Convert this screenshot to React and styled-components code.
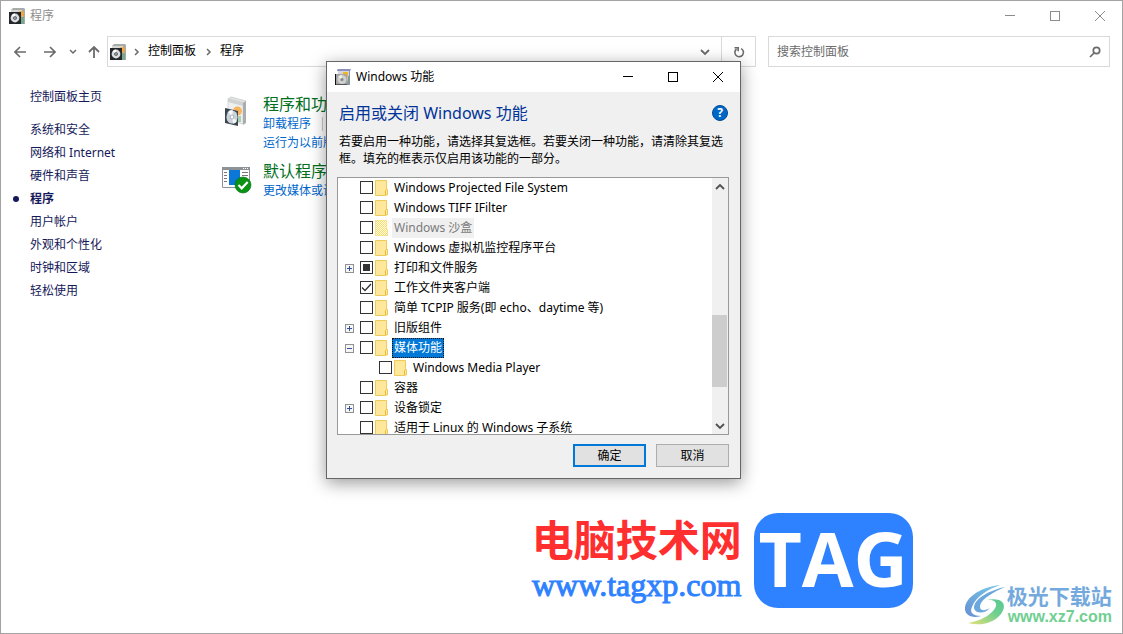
import React, { useState } from "react";
import styled, { createGlobalStyle, css } from "styled-components";

const Global = createGlobalStyle`
  * { box-sizing: border-box; }
  body {
    margin: 0;
    background: #fff;
    color: #000;
    font: 12px/16px "Noto Sans", "Noto Sans CJK SC", sans-serif;
  }
  button, input { font: inherit; color: inherit; }
  a { text-decoration: none; color: inherit; }
  ul { list-style: none; margin: 0; padding: 0; }
  svg { display: block; flex: none; }
`;

const Explorer = styled.div`
  position: relative;
  display: flex;
  flex-direction: column;
  min-height: 100vh;
  border: 1px solid #a3a3a3;
  background: #fff;
`;

const TitleBar = styled.header`
  display: flex;
  align-items: center;
  height: 29px;
  padding-left: 8px;
  color: ${(p) => (p.$active ? "#000" : "#8c8c8c")};
  background: #fff;
  ${(p) => p.$active && css`height: 30px;`}
`;

const Caption = styled.span`
  flex: 1;
  margin-left: 5px;
`;

const WindowButton = styled.button`
  display: flex;
  align-items: center;
  justify-content: center;
  width: 45px;
  height: 100%;
  padding: 0;
  border: 0;
  background: none;
`;

const Toolbar = styled.nav`
  display: flex;
  height: 31px;
  margin-top: 6px;
  padding: 0 12px 0 4px;
  color: #6b6b6b;
`;

const NavButton = styled.button`
  display: flex;
  align-items: center;
  justify-content: center;
  width: ${(p) => p.$width}px;
  padding: 0;
  border: 0;
  background: none;
`;

const AddressBar = styled.div`
  display: flex;
  align-items: center;
  flex: 645 1 0;
  margin-right: 12px;
  padding-left: 2px;
  border: 1px solid #d9d9d9;
  color: #6b6b6b;
`;

const Crumb = styled.a`
  color: #000;
  margin: 0 10px 0 8px;
  padding-bottom: 2px;
`;

const Crumbs = styled.div`
  display: flex;
  align-items: center;
  flex: 1;
  padding-left: 8px;
`;

const BarButton = styled.button`
  display: flex;
  align-items: center;
  justify-content: center;
  align-self: stretch;
  width: 34px;
  padding: 0;
  border: 0;
  border-left: 1px solid ${(p) => (p.$divided ? "#d9d9d9" : "transparent")};
  background: none;
`;

const SearchBox = styled.label`
  display: flex;
  align-items: center;
  flex: 324 1 0;
  padding: 0 8px;
  border: 1px solid #d9d9d9;
`;

const SearchInput = styled.input`
  flex: 1;
  min-width: 0;
  padding: 0;
  border: 0;
  outline: 0;
  background: none;
  &::placeholder { color: #6b6b6b; opacity: 1; }
`;

const Body = styled.div`
  display: flex;
  flex: 1;
`;

const Sidebar = styled.aside`
  width: 219px;
  padding: 18px 0 0 29px;
  color: #15195a;
`;

const SideLink = styled.a`
  display: flex;
  align-items: center;
  height: 23px;
  font-weight: ${(p) => (p.$current ? 700 : 400)};
  ${(p) => p.$current && css`
    margin-left: -17px;
    gap: 11px;
    &::before {
      content: "";
      width: 6px;
      height: 6px;
      border-radius: 3px;
      background: #15195a;
    }
  `}
`;

const SideList = styled.ul`
  margin-top: 10px;
`;

const Categories = styled.main`
  display: flex;
  flex-direction: column;
  flex: 1;
  gap: 9px;
  padding-top: 27px;
`;

const Category = styled.section`
  display: flex;
  gap: 11px;
  svg { margin-top: 2px; }
`;

const CategoryTitle = styled.h2`
  margin: 0;
  font-size: 16px;
  line-height: 20px;
  font-weight: 400;
  color: #00701c;
`;

const Tasks = styled.div`
  display: flex;
  align-items: center;
  height: 19px;
  color: #0066cc;
`;

const TaskDivider = styled.span`
  width: 1px;
  height: 14px;
  margin: 0 11px;
  background: #c8c8c8;
`;

const Dialog = styled.div`
  position: absolute;
  left: 325px;
  top: 60px;
  width: 415px;
  border: 1px solid #666;
  background: #f0f0f0;
  box-shadow: 0 4px 16px rgba(0, 0, 0, 0.4);
`;

const DialogBody = styled.div`
  padding: 10px 11px 11px 10px;
`;

const DialogHead = styled.div`
  display: flex;
  align-items: center;
  justify-content: space-between;
  padding-right: 1px;
`;

const DialogTitle = styled.h1`
  margin: 0 0 0 2px;
  font-size: 16px;
  line-height: 22px;
  font-weight: 400;
  color: #003399;
`;

const HelpButton = styled.button`
  width: 16px;
  height: 16px;
  padding: 0;
  border: 1px solid #004b93;
  border-radius: 8px;
  background: #0067c8;
  color: #fff;
  font-size: 12px;
  line-height: 14px;
  font-weight: 700;
`;

const Description = styled.p`
  margin: 9px 0 10px 2px;
  line-height: 17px;
`;

const ListFrame = styled.div`
  display: flex;
  height: 258px;
  border: 1px solid #999;
  background: #fff;
  overflow: hidden;
`;

const FeatureTree = styled.ul`
  flex: 1;
`;

const FeatureRow = styled.li`
  display: flex;
  height: 20px;
  padding-left: ${(p) => (p.$child ? 26 : 7)}px;
`;

const ExpanderSlot = styled.span`
  width: 15px;
  padding-top: 6px;
`;

const Expander = styled.button`
  display: block;
  width: 9px;
  height: 9px;
  padding: 0;
  border: 0;
  background: none;
`;

const Tick = styled.input`
  appearance: none;
  width: 13px;
  height: 13px;
  margin: 3px 2px 0 0;
  border: 1px solid #333;
  background: #fff center / 11px 11px no-repeat;
  &:checked {
    background-image: url("data:image/svg+xml,%3Csvg xmlns='http://www.w3.org/2000/svg' viewBox='0 0 11 11'%3E%3Cpath d='M1 5.5 4 8.5 10 2' fill='none' stroke='%23333' stroke-width='1.3'/%3E%3C/svg%3E");
  }
  &:indeterminate {
    background-image: linear-gradient(#333, #333);
    background-size: 7px 7px;
  }
`;

const FeatureLabel = styled.label`
  margin-left: 4px;
  padding: 0 2px;
  line-height: 20px;
  white-space: nowrap;
  ${(p) => p.$disabled && css`
    color: #7a7a7a;
    background: #f0f0f0;
  `}
  ${(p) => p.$selected && css`
    color: #fff;
    background: #0078d7;
    outline: 1px dotted #1a1008;
    outline-offset: -1px;
  `}
`;

const ScrollBar = styled.div`
  display: flex;
  flex-direction: column;
  width: 16px;
  background: #f0f0f0;
  color: #505050;
`;

const ScrollArrow = styled.button`
  display: flex;
  align-items: center;
  justify-content: center;
  height: 17px;
  padding: 0;
  border: 0;
  background: none;
`;

const ScrollTrack = styled.div`
  flex: 1;
  padding-top: 120px;
`;

const ScrollThumb = styled.div`
  width: 15px;
  height: 72px;
  background: #cdcdcd;
`;

const Actions = styled.div`
  display: flex;
  justify-content: flex-end;
  gap: 10px;
  margin-top: 9px;
`;

const PushButton = styled.button`
  width: 73px;
  height: 23px;
  padding: 0;
  line-height: 16px;
  background: #e1e1e1;
  border: ${(p) => (p.$primary ? "2px solid #0078d7" : "1px solid #adadad")};
`;

const Footer = styled.footer`
  display: flex;
  justify-content: flex-end;
  align-items: flex-end;
  padding: 0 10px 7px 0;
`;

const TagBrand = styled.div`
  display: flex;
  align-items: center;
  gap: 12px;
  margin: 0 51px 18px 0;
`;

const TagText = styled.div`
  text-align: center;
  white-space: nowrap;
`;

const TagName = styled.div`
  font: 700 42px/48px "Noto Sans CJK SC", sans-serif;
  color: #ff2f2f;
`;

const TagUrl = styled.a`
  display: block;
  font: 400 32px/46px "Liberation Serif", serif;
  color: #2f82ff;
  -webkit-text-stroke: 1px #2f82ff;
`;

const TagBadge = styled.div`
  width: 159px;
  height: 95px;
  border-radius: 24px;
  background: #2f82ff;
  color: #fff;
  text-align: center;
  font: 700 75px/90px "Open Sans", sans-serif;
`;

const XzBrand = styled.div`
  display: flex;
  align-items: center;
  gap: 1px;
`;

const XzName = styled.div`
  font: 700 21px/23px "Noto Sans CJK SC", sans-serif;
  color: #73a9dc;
`;

const XzUrl = styled.a`
  display: block;
  padding-left: 1px;
  font: 700 16px/19px "Liberation Sans", sans-serif;
  color: #70cf91;
`;

const ProgramsGlyph = ({ size = 16, warm = "#f2a541" }) => (
  <svg width={size} height={size} viewBox="0 0 16 16">
    <path d="M2 2 4 0h11l1 1v15h-3V3H2z" fill="#a8aba8" />
    <path d="M2 2h11v3H2z" fill="#d6d8d6" />
    <path d="M3 4h11v12H3z" fill="#cfd0c4" />
    <circle cx="12" cy="6" r="3" fill={warm} />
    <path d="M12 9h3v7h-3z" fill="#78a88d" />
    <path d="M0 4h12v12H0z" fill="#24272b" />
    <circle cx="6" cy="10" r="4.400" fill="#d9dde0" />
    <path d="M6 10 2.500 7.500A4.400 4.400 0 0 1 6 5.600z" fill="#fff" />
    <circle cx="6" cy="10" r="1.800" fill="#34383c" />
    <circle cx="6" cy="10" r=".8" fill="#fff" />
  </svg>
);

const FeaturesGlyph = () => (
  <svg width="16" height="16" viewBox="0 0 16 16">
    <path d="M2 1 3 0h13l-1 2v14h-3V2H2z" fill="#8f8fbc" />
    <path d="M3 2h11v12H3z" fill="#d5d5df" />
    <path d="M8 3h5v5H8z" fill="#f1b91c" />
    <path d="M13 7h1v8h-2z" fill="#7aa078" />
    <path d="M1 5h11v11H1z" fill="#a5a5a5" />
    <path d="M0 5h1v11H0z" fill="#111" />
    <circle cx="7" cy="10.500" r="4.500" fill="#cfd0cf" />
    <path d="M7 10.500 3 8a5 5 0 0 1 4-2z" fill="#efefef" />
    <circle cx="7" cy="10.500" r="1.500" fill="#858585" />
    <path d="M1 15.500h11" stroke="#555" />
  </svg>
);

const SoftwareBoxIcon = () => (
  <svg width="32" height="32" viewBox="0 0 32 32">
    <path d="M8 3 11 1l15 4-2 2z" fill="#e4e5e5" stroke="#b9bbbb" strokeWidth=".6" />
    <path d="M8 3 23 7v21L8 24z" fill="#eeefef" stroke="#c3c5c5" strokeWidth=".6" />
    <path d="m23 7 3-2v22l-3 2z" fill="#a9adaf" />
    <path d="m8 3 15 4v3L8 6z" fill="#d0d2d3" />
    <circle cx="17.500" cy="15" r="4.500" fill="#f6b45c" />
    <path d="M16 20h5v6h-5z" fill="#a8d1b5" />
    <path d="M5 12 18 15v15L5 27z" fill="#3b4651" />
    <ellipse cx="12" cy="21" rx="5.600" ry="6.600" fill="#cbd3da" />
    <path d="M12 21 8 16q2-3 5-1.500zM12 21l5 4q-2 3-4 2.500z" fill="#f5f7f8" />
    <ellipse cx="12" cy="21" rx="1.800" ry="2" fill="#fff" stroke="#8e979f" strokeWidth=".7" />
  </svg>
);

const DefaultProgramsIcon = () => (
  <svg width="32" height="32" viewBox="0 0 32 32">
    <path d="M2.500 4.500h27v20h-27z" fill="#fff" stroke="#8c9296" />
    <path d="M2 4h28v3H2z" fill="#8c9296" />
    <path d="M23 5.500h1m1 0h1m1 0h1" stroke="#fff" />
    <path d="M9 7h11v15H9z" fill="#0b78d8" />
    <path d="M4 9.500h3m-3 3h3m-3 3h3m-3 3h3m15-9h6m-6 3h6" stroke="#777" />
    <circle cx="23" cy="22" r="8" fill="#0a9215" stroke="#067010" strokeWidth=".6" />
    <path d="m18.500 22 3.200 3.300 6-6.300" fill="none" stroke="#fff" strokeWidth="2.200" />
  </svg>
);

const Stroke = ({ w = 12, h = 12, d, width = 1, crisp }) => (
  <svg width={w} height={h} viewBox={`0 0 ${w} ${h}`} fill="none" stroke="currentColor"
    strokeWidth={width} shapeRendering={crisp ? "crispEdges" : "auto"}>
    <path d={d} />
  </svg>
);

const FolderIcon = ({ faded }) => (
  <svg width="13" height="20" viewBox="0 0 13 20">
    <defs>
      <pattern id="dither" width="2" height="2" patternUnits="userSpaceOnUse">
        <path d="M0 0h1v1H0zM1 1h1v1H1z" fill="#ffdc55" shapeRendering="crispEdges" />
      </pattern>
    </defs>
    {faded ? (
      <path d="M.5 2.500h11v9h1v6H.5z" fill="url(#dither)" stroke="#f3cd45" strokeDasharray="1 1" />
    ) : (
      <>
        <path d="M.5 2.500h11v9h1v5.500h-2v.5H.5z" fill="#ffe79b" stroke="#efcb58" />
        <path d="M10.500 17v-4.500l1-1" fill="none" stroke="#e9b93a" />
      </>
    )}
  </svg>
);

const ExpanderIcon = ({ open }) => (
  <svg width="9" height="9" viewBox="0 0 9 9" shapeRendering="crispEdges">
    <path d="M.5.5h8v8h-8z" fill="#f5f5f5" stroke="#919191" />
    <path d={open ? "M2 4.500h5" : "M2 4.500h5M4.500 2v5"} stroke="#35509a" />
  </svg>
);

const SwirlLogo = () => (
  <svg width="42" height="42" viewBox="0 0 42 42">
    <defs>
      <linearGradient id="sky" x1="0" y1="1" x2="1" y2="0">
        <stop offset="0" stopColor="#6790d4" />
        <stop offset="1" stopColor="#78cbe8" />
      </linearGradient>
      <linearGradient id="leaf" x1="0" y1="1" x2="1" y2="0">
        <stop offset="0" stopColor="#e6e07a" />
        <stop offset=".6" stopColor="#6fd08f" />
        <stop offset="1" stopColor="#55c894" />
      </linearGradient>
    </defs>
    <path d="M36 1C24 2 4 9 1 23c-1 8 7 12 16 9-7 0-12-3-9-9C12 12 25 5 36 1z" fill="url(#sky)" />
    <path d="M41 3C27 6 10 14 10 24c1 6 11 6 16 0-5 3-10 3-10-1C16 15 30 8 41 3z" fill="#6ba7df" />
    <path d="M23 16c10-1 12 5 5 12-6 6-14 9-24 11 11 3 25 1 33-9 7-10 1-17-14-14z" fill="url(#leaf)" />
  </svg>
);

const RefreshIcon = () => (
  <svg width="12" height="12" viewBox="0 0 12 12" fill="none" stroke="currentColor" strokeWidth="1.600">
    <path d="M8.200 2.600A4.300 4.300 0 1 1 3.500 3" />
    <path d="M1.500 1.700h3.700v3.600" />
  </svg>
);

const SearchIcon = () => (
  <svg width="12" height="12" viewBox="0 0 12 12" fill="none" stroke="#6b6b6b" strokeWidth="1.700">
    <circle cx="7.500" cy="4.500" r="3.200" />
    <path d="M5 7 1 11" />
  </svg>
);

const WindowButtons = () => (
  <>
    <WindowButton aria-label="最小化"><Stroke d="M1 5.500h10" crisp /></WindowButton>
    <WindowButton aria-label="最大化"><Stroke d="M1.500 1.500h9v9h-9z" crisp /></WindowButton>
    <WindowButton aria-label="关闭"><Stroke d="M1 1l10 10M11 1 1 11" /></WindowButton>
  </>
);

const sideItems = ["系统和安全", "网络和 Internet", "硬件和声音", "程序", "用户帐户", "外观和个性化", "时钟和区域", "轻松使用"];

const features = [
  { name: "Windows Projected File System" },
  { name: "Windows TIFF IFilter" },
  { name: "Windows 沙盒", disabled: true },
  { name: "Windows 虚拟机监控程序平台" },
  { name: "打印和文件服务", expander: "closed", partial: true },
  { name: "工作文件夹客户端", checked: true },
  { name: "简单 TCPIP 服务(即 echo、daytime 等)" },
  { name: "旧版组件", expander: "closed" },
  { name: "媒体功能", expander: "open", selected: true },
  { name: "Windows Media Player", child: true },
  { name: "容器" },
  { name: "设备锁定", expander: "closed" },
  { name: "适用于 Linux 的 Windows 子系统" },
];

function Feature({ item, id }) {
  const [checked, setChecked] = useState(!!item.checked);
  return (
    <FeatureRow $child={item.child}>
      <ExpanderSlot>
        {item.expander && (
          <Expander aria-label={item.expander === "open" ? "折叠" : "展开"}>
            <ExpanderIcon open={item.expander === "open"} />
          </Expander>
        )}
      </ExpanderSlot>
      <Tick
        id={id}
        type="checkbox"
        disabled={item.disabled}
        checked={checked}
        onChange={(e) => setChecked(e.target.checked)}
        ref={(el) => { if (el) el.indeterminate = !!item.partial; }}
      />
      <FolderIcon faded={item.disabled} />
      <FeatureLabel htmlFor={id} $disabled={item.disabled} $selected={item.selected}>{item.name}</FeatureLabel>
    </FeatureRow>
  );
}

export default function App() {
  return (
    <Explorer lang="zh-CN">
      <Global />
      <TitleBar>
        <ProgramsGlyph />
        <Caption>程序</Caption>
        <WindowButtons />
      </TitleBar>
      <Toolbar>
        <NavButton $width={30} aria-label="后退"><Stroke d="M12 6H1M6 1 1 6l5 5" width={1.6} /></NavButton>
        <NavButton $width={30} aria-label="前进"><Stroke d="M0 6h11M6 1l5 5-5 5" width={1.6} /></NavButton>
        <NavButton $width={16} aria-label="最近的位置"><Stroke w={8} h={6} d="M1 1l3 3 3-3" width={1.5} /></NavButton>
        <NavButton $width={26} aria-label="向上"><Stroke d="M6 12V1M1 6l5-5 5 5" width={1.8} /></NavButton>
        <AddressBar>
          <ProgramsGlyph />
          <Crumbs>
            <Stroke w={6} h={8} d="M1 1l3 3-3 3" width={1.5} />
            <Crumb href="#panel">控制面板</Crumb>
            <Stroke w={6} h={8} d="M1 1l3 3-3 3" width={1.5} />
            <Crumb href="#programs">程序</Crumb>
          </Crumbs>
          <BarButton aria-label="历史"><Stroke w={10} h={8} d="M1 2l4 4 4-4" width={1.8} /></BarButton>
          <BarButton $divided aria-label="刷新"><RefreshIcon /></BarButton>
        </AddressBar>
        <SearchBox>
          <SearchInput type="text" placeholder="搜索控制面板" aria-label="搜索控制面板" />
          <SearchIcon />
        </SearchBox>
      </Toolbar>
      <Body>
        <Sidebar>
          <SideLink href="#home">控制面板主页</SideLink>
          <SideList>
            {sideItems.map((name) => (
              <li key={name}><SideLink href="#category" $current={name === "程序"}>{name}</SideLink></li>
            ))}
          </SideList>
        </Sidebar>
        <Categories>
          <Category>
            <SoftwareBoxIcon />
            <div>
              <CategoryTitle>程序和功</CategoryTitle>
              <Tasks><a href="#uninstall">卸载程序</a><TaskDivider /></Tasks>
              <Tasks><a href="#compat">运行为以前版</a></Tasks>
            </div>
          </Category>
          <Category>
            <DefaultProgramsIcon />
            <div>
              <CategoryTitle>默认程序</CategoryTitle>
              <Tasks><a href="#defaults">更改媒体或设</a></Tasks>
            </div>
          </Category>
        </Categories>
      </Body>
      <Footer>
        <TagBrand>
          <TagText>
            <TagName>电脑技术网</TagName>
            <TagUrl href="#tagxp">www.tagxp.com</TagUrl>
          </TagText>
          <TagBadge>TAG</TagBadge>
        </TagBrand>
        <XzBrand>
          <SwirlLogo />
          <div>
            <XzName>极光下载站</XzName>
            <XzUrl href="#xz7">www.xz7.com</XzUrl>
          </div>
        </XzBrand>
      </Footer>
      <Dialog role="dialog" aria-labelledby="dialog-title">
        <TitleBar $active>
          <FeaturesGlyph />
          <Caption>Windows 功能</Caption>
          <WindowButtons />
        </TitleBar>
        <DialogBody>
          <DialogHead>
            <DialogTitle id="dialog-title">启用或关闭 Windows 功能</DialogTitle>
            <HelpButton>?</HelpButton>
          </DialogHead>
          <Description>若要启用一种功能，请选择其复选框。若要关闭一种功能，请清除其复选框。填充的框表示仅启用该功能的一部分。</Description>
          <ListFrame>
            <FeatureTree>
              {features.map((item, i) => <Feature key={item.name} item={item} id={`feature-${i}`} />)}
            </FeatureTree>
            <ScrollBar>
              <ScrollArrow aria-label="向上滚动"><Stroke w={10} h={8} d="M1 6l4-4 4 4" width={1.8} /></ScrollArrow>
              <ScrollTrack><ScrollThumb /></ScrollTrack>
              <ScrollArrow aria-label="向下滚动"><Stroke w={10} h={8} d="M1 2l4 4 4-4" width={1.8} /></ScrollArrow>
            </ScrollBar>
          </ListFrame>
          <Actions>
            <PushButton $primary>确定</PushButton>
            <PushButton>取消</PushButton>
          </Actions>
        </DialogBody>
      </Dialog>
    </Explorer>
  );
}
